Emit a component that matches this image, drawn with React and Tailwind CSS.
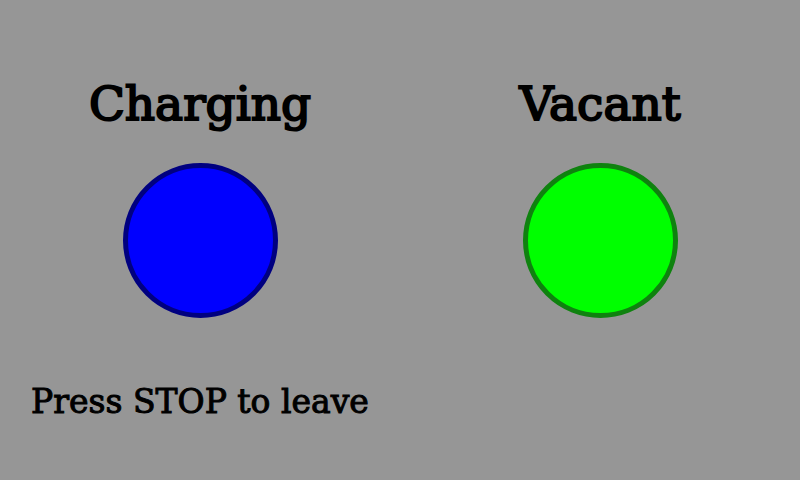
const bays = [
  { status: "Charging", circle: "bg-[#0000ff] border-[#000080]" },
  { status: "Vacant", circle: "bg-[#00ff00] border-[#0f820f]" },
];

export default function App() {
  return (
    <main className="min-h-screen bg-[#969696] pt-20 pb-14 font-['DejaVu_Serif',serif] text-black">
      <div className="grid grid-cols-2">
        {bays.map((bay) => (
          <section key={bay.status} className="flex flex-col items-center">
            <h1 className="text-[47px] leading-12 font-normal [-webkit-text-stroke:2px_black]">{bay.status}</h1>
            <div className={`mt-[35px] size-[155px] rounded-full border-5 ${bay.circle}`} />
          </section>
        ))}
      </div>
      <div className="mt-16 grid grid-cols-2">
        <p className="text-center text-[33px] leading-10 [-webkit-text-stroke:1px_black]">Press STOP to leave</p>
      </div>
    </main>
  );
}
